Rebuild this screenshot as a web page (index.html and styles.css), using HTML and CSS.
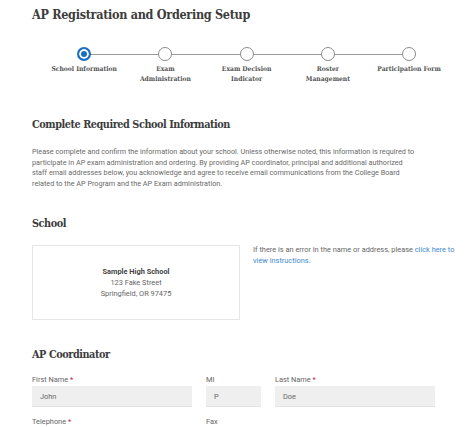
FILE: index.html
```html
<!DOCTYPE html>
<html>
<head>
<meta charset="utf-8">
<link rel="stylesheet" href="styles.css">
</head>
<body>
<main class="page">
  <h1 class="title">AP Registration and Ordering Setup</h1>

  <ol class="stepper">
    <li class="step active"><span class="dot"></span><span class="step-label">School Information</span></li>
    <li class="step"><span class="dot"></span><span class="step-label">Exam<br>Administration</span></li>
    <li class="step"><span class="dot"></span><span class="step-label">Exam Decision<br>Indicator</span></li>
    <li class="step"><span class="dot"></span><span class="step-label">Roster<br>Management</span></li>
    <li class="step"><span class="dot"></span><span class="step-label">Participation Form</span></li>
  </ol>

  <h2 class="section-title first">Complete Required School Information</h2>
  <p class="intro">Please complete and confirm the information about your school. Unless otherwise noted, this information is required to participate in AP exam administration and ordering. By providing AP coordinator, principal and additional authorized staff email addresses below, you acknowledge and agree to receive email communications from the College Board related to the AP Program and the AP Exam administration.</p>

  <h2 class="section-title">School</h2>
  <div class="school-row">
    <div class="school-card">
      <div class="school-name">Sample High School</div>
      <div>123 Fake Street</div>
      <div>Springfield, OR 97475</div>
    </div>
    <p class="school-note">If there is an error in the name or address, please <a href="#" class="link">click here to view instructions.</a></p>
  </div>

  <h2 class="section-title">AP Coordinator</h2>
  <div class="form-grid">
    <div class="field">
      <label class="field-label">First Name <span class="req">*</span></label>
      <div class="input">John</div>
    </div>
    <div class="field">
      <label class="field-label">MI</label>
      <div class="input">P</div>
    </div>
    <div class="field">
      <label class="field-label">Last Name <span class="req">*</span></label>
      <div class="input">Doe</div>
    </div>
    <div class="field">
      <label class="field-label">Telephone <span class="req">*</span></label>
    </div>
    <div class="field">
      <label class="field-label">Fax</label>
    </div>
  </div>
</main>
</body>
</html>
```

FILE: styles.css
```css
* { box-sizing: border-box; }
html, body { margin: 0; padding: 0; background: #fff; }
body {
  font-family: Roboto, "Liberation Sans", sans-serif;
  color: #666;
  overflow: hidden;
}
.page {
  padding: 5px 0 0 32px;
  width: 474px;
}
.title {
  margin: 0;
  font-family: "DejaVu Serif", serif;
  font-stretch: condensed;
  font-weight: bold;
  font-size: 12.5px;
  line-height: 20px;
  color: #3c3c3c;
  letter-spacing: -0.3px;
}
.stepper {
  list-style: none;
  margin: 22px 0 0 11.5px;
  padding: 0;
  display: grid;
  grid-template-columns: repeat(5, 81.25px);
}
.step {
  position: relative;
  display: flex;
  flex-direction: column;
  align-items: center;
}
.step + .step::before {
  content: "";
  position: absolute;
  top: 7px;
  right: 50%;
  width: 81.25px;
  height: 1px;
  background: #9a9a9a;
}
.dot {
  position: relative;
  z-index: 1;
  width: 14px;
  height: 14px;
  border-radius: 50%;
  border: 1px solid #8a8a8a;
  background: #fff;
}
.step.active .dot {
  border: 2px solid #1c6fc2;
  box-shadow: inset 0 0 0 2px #fff;
  background: #1c6fc2;
}
.step-label {
  margin-top: 3px;
  font-family: "DejaVu Serif", serif;
  font-stretch: condensed;
  font-weight: bold;
  font-size: 6.7px;
  line-height: 10px;
  color: #555;
  text-align: center;
  white-space: nowrap;
}
.section-title {
  margin: 26px 0 0;
  font-family: "DejaVu Serif", serif;
  font-stretch: condensed;
  font-weight: bold;
  font-size: 10.8px;
  line-height: 18px;
  letter-spacing: -0.45px;
  color: #3c3c3c;
}
.section-title.first { margin-top: 32px; }
.intro {
  margin: 13px 0 0;
  width: 384px;
  font-size: 7.25px;
  line-height: 10.6px;
  color: #6a6a6a;
}
.school-row {
  margin-top: 12px;
  display: flex;
  gap: 13px;
  align-items: flex-start;
}
.school-card {
  width: 208px;
  height: 75px;
  border: 1px solid #e6e6e6;
  display: flex;
  flex-direction: column;
  justify-content: center;
  align-items: center;
  font-size: 7.4px;
  line-height: 11px;
  color: #666;
}
.school-name { font-weight: bold; color: #444; }
.school-note {
  margin: 0;
  width: 205px;
  font-size: 7.4px;
  line-height: 10.5px;
  color: #666;
}
.link { color: #3d8bd0; text-decoration: none; }
.form-grid {
  margin-top: 10px;
  display: grid;
  grid-template-columns: 160px 55px 160px;
  column-gap: 14px;
  row-gap: 9px;
}
.field { display: flex; flex-direction: column; }
.field-label {
  font-size: 7.4px;
  line-height: 11px;
  color: #666;
}
.req { color: #b0243a; }
.input {
  margin-top: 1px;
  height: 21px;
  background: #efefef;
  border-bottom: 1px solid #e2e2e2;
  padding-left: 8px;
  display: flex;
  align-items: center;
  font-size: 7.4px;
  color: #666;
}
```
